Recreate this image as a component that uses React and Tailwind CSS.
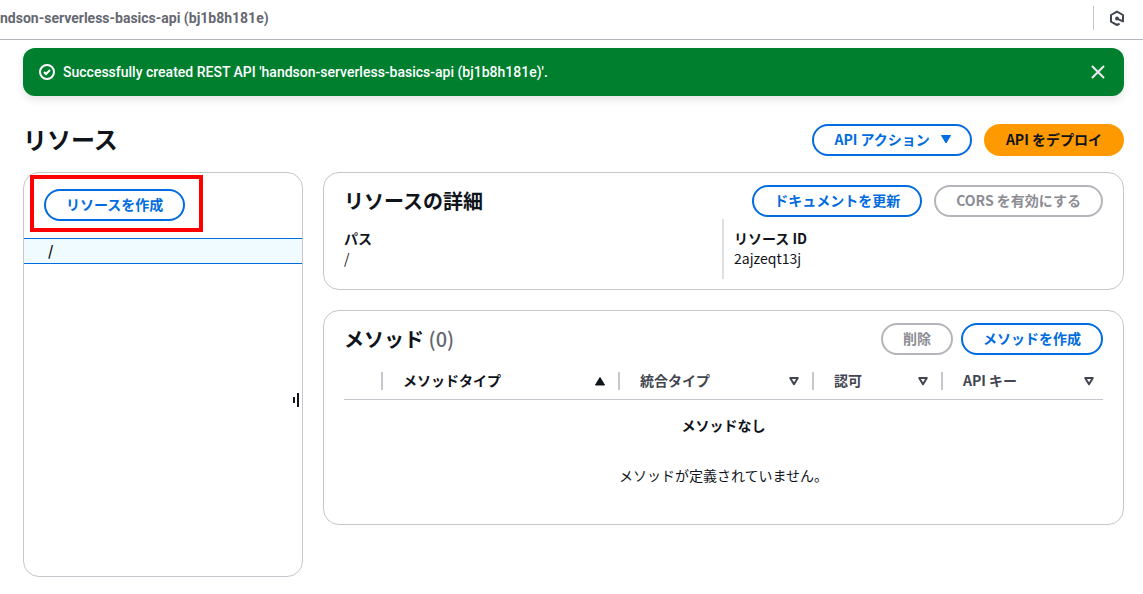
import React from "react";
import clsx from "clsx";

const columns = [
  { label: "メソッドタイプ", width: "w-[237px]", sorted: true },
  { label: "統合タイプ", width: "w-[194px]" },
  { label: "認可", width: "w-[129px]" },
  { label: "API キー", width: "w-auto", last: true },
];

const variants = {
  normal: "border-2 border-[#006ce0] bg-white text-[#006ce0]",
  primary: "border-2 border-[#ff9900] bg-[#ff9900] text-[#0f141a]",
  disabled: "border-2 border-[#b4b4bb] bg-white text-[#8c8c94]",
};

const Button = ({ variant = "normal", className, children }) => (
  <button
    type="button"
    disabled={variant === "disabled"}
    className={clsx(
      "flex h-8 items-center justify-center gap-2 whitespace-nowrap rounded-full px-5 pb-[2px] font-bold",
      variants[variant],
      className
    )}
  >
    {children}
  </button>
);

const Panel = ({ className, children }) => (
  <section className={clsx("rounded-2xl border border-[#c6c6cd] bg-white", className)}>
    {children}
  </section>
);

const SortIcon = ({ sorted }) => (
  <svg viewBox="0 0 16 16" className="size-4 shrink-0" aria-hidden="true">
    {sorted ? (
      <path d="M8 4.5 12.5 12h-9z" fill="currentColor" stroke="currentColor" strokeLinejoin="round" />
    ) : (
      <path d="M4.2 5h7.6L8 11.2z" fill="none" stroke="currentColor" strokeWidth="2" strokeLinejoin="round" />
    )}
  </svg>
);

const Header = () => (
  <header className="flex h-10 items-center justify-between border-b border-[#b4b4bb] pb-[3px]">
    <span className="whitespace-nowrap font-['Roboto',sans-serif] font-bold text-[#656871]">
      ndson-serverless-basics-api (bj1b8h181e)
    </span>
    <div className="flex h-6 items-center border-l border-[#c6c6cd] pl-[15px] pr-[18px]">
      <button type="button" aria-label="Amazon Q" className="text-[#424650]">
        <svg viewBox="0 0 16 16" className="size-4" fill="none" stroke="currentColor">
          <path
            d="M10.6 13.6 8 15l-6-3.3V5l6-3.4L14 5v6.4"
            strokeWidth="2"
            strokeLinejoin="round"
          />
          <path d="M8 8.6l6 2.8" strokeWidth="2" strokeLinecap="round" />
          <circle cx="8" cy="8.6" r="2" fill="currentColor" stroke="none" />
        </svg>
      </button>
    </div>
  </header>
);

const Flashbar = () => (
  <div
    role="status"
    className="flex h-12 items-center rounded-xl bg-[#00802f] px-4 text-white shadow-[0_4px_8px_rgba(0,7,22,0.1)]"
  >
    <svg viewBox="0 0 16 16" className="size-4 shrink-0" fill="none" stroke="currentColor" strokeWidth="2">
      <circle cx="8" cy="8" r="7" />
      <path d="m5 8 2 2 4-4" />
    </svg>
    <p className="ml-2 flex-1 font-['Roboto',sans-serif] font-medium">
      Successfully created REST API &apos;handson-serverless-basics-api (bj1b8h181e)&apos;.
    </p>
    <button type="button" aria-label="閉じる" className="mr-[2px] text-[#ebebf0]">
      <svg viewBox="0 0 16 16" className="size-4" fill="none" stroke="currentColor" strokeWidth="2">
        <path d="m2 2 12 12M14 2 2 14" />
      </svg>
    </button>
  </div>
);

const ResourceTree = () => (
  <Panel className="relative min-h-[405px] w-[280px] shrink-0">
    <div className="flex h-[65px] items-start px-5 pt-4">
      <div className="relative">
        <Button>リソースを作成</Button>
        {/* callout around the create button */}
        <div className="pointer-events-none absolute -bottom-[11px] -left-[14px] -right-[18px] -top-[14px] border-4 border-[#ff0000]" />
      </div>
    </div>
    <a
      href="#root"
      className="flex h-[26px] items-center border-y border-[#006ce0] bg-[#f0fbff] pb-[2px] pl-6 font-bold"
    >
      /
    </a>
    <div
      role="separator"
      aria-orientation="vertical"
      className="absolute right-[3px] top-[219px] flex h-4 items-center gap-[2px]"
    >
      <span className="h-[6px] w-[2px] bg-[#0f141a]" />
      <span className="h-[14px] w-[2px] bg-[#0f141a]" />
    </div>
  </Panel>
);

const ResourceDetails = () => (
  <Panel className="px-5 pb-[10px] pt-3">
    <div className="flex items-center">
      <h2 className="flex-1 text-xl font-bold">リソースの詳細</h2>
      <div className="flex gap-3">
        <Button>ドキュメントを更新</Button>
        <Button variant="disabled">CORS を有効にする</Button>
      </div>
    </div>
    <dl className="mt-[2px] grid grid-cols-[378fr_381fr]">
      <div className="pb-[11px] pt-[9px]">
        <dt className="font-bold">パス</dt>
        <dd>/</dd>
      </div>
      <div className="border-l-2 border-[#dedee3] pb-[11px] pl-[10px] pt-[9px]">
        <dt className="font-bold">リソース ID</dt>
        <dd>2ajzeqt13j</dd>
      </div>
    </dl>
  </Panel>
);

const Methods = () => (
  <Panel className="px-5 pb-[39px] pt-3">
    <div className="flex items-center">
      <h2 className="flex-1 text-xl font-bold">
        メソッド <span className="font-medium text-[#656871]">(0)</span>
      </h2>
      <div className="flex gap-2">
        <Button variant="disabled">削除</Button>
        <Button>メソッドを作成</Button>
      </div>
    </div>
    <table className="mt-2 w-full table-fixed">
      <thead>
        <tr className="h-9 border-b border-[#c6c6cd]">
          <td className="w-[39px]">
            <span className="ml-auto block h-[18px] w-[2px] bg-[#c6c6cd]" />
          </td>
          {columns.map((column) => (
            <th key={column.label} scope="col" className={clsx("p-0", column.width)}>
              <div className="flex items-center">
                <button
                  type="button"
                  className={clsx(
                    "flex flex-1 items-center justify-between pl-5 font-bold",
                    column.last ? "pr-[6px]" : "pr-[10px]",
                    column.sorted ? "text-[#0f141a]" : "text-[#424650]"
                  )}
                >
                  <span className="pb-[2px]">{column.label}</span>
                  <SortIcon sorted={column.sorted} />
                </button>
                {!column.last && <span className="h-[18px] w-[2px] bg-[#c6c6cd]" />}
              </div>
            </th>
          ))}
        </tr>
      </thead>
      <tbody>
        <tr>
          <td colSpan={5} className="pt-[15px] text-center">
            <p className="font-bold">メソッドなし</p>
            <p className="mt-[30px]">メソッドが定義されていません。</p>
          </td>
        </tr>
      </tbody>
    </table>
  </Panel>
);

const App = () => (
  <div className="min-h-screen bg-white font-['Noto_Sans_CJK_JP',sans-serif] text-sm/5 text-[#0f141a]">
    <Header />
    <main className="pb-4 pl-[23px] pr-[19px] pt-2">
      <Flashbar />
      <div className="mt-7 flex items-center gap-3">
        <h1 className="flex-1 pb-[2px] text-2xl/7 font-bold">リソース</h1>
        <Button>
          API アクション
          <svg viewBox="0 0 16 16" className="-mr-1 size-4" fill="currentColor" aria-hidden="true">
            <path d="M3.5 4.5h9L8 12z" stroke="currentColor" strokeLinejoin="round" />
          </svg>
        </Button>
        <Button variant="primary">API をデプロイ</Button>
      </div>
      <div className="mt-4 flex items-start gap-5">
        <ResourceTree />
        <div className="flex min-w-0 flex-1 flex-col gap-5">
          <ResourceDetails />
          <Methods />
        </div>
      </div>
    </main>
  </div>
);

export default App;
